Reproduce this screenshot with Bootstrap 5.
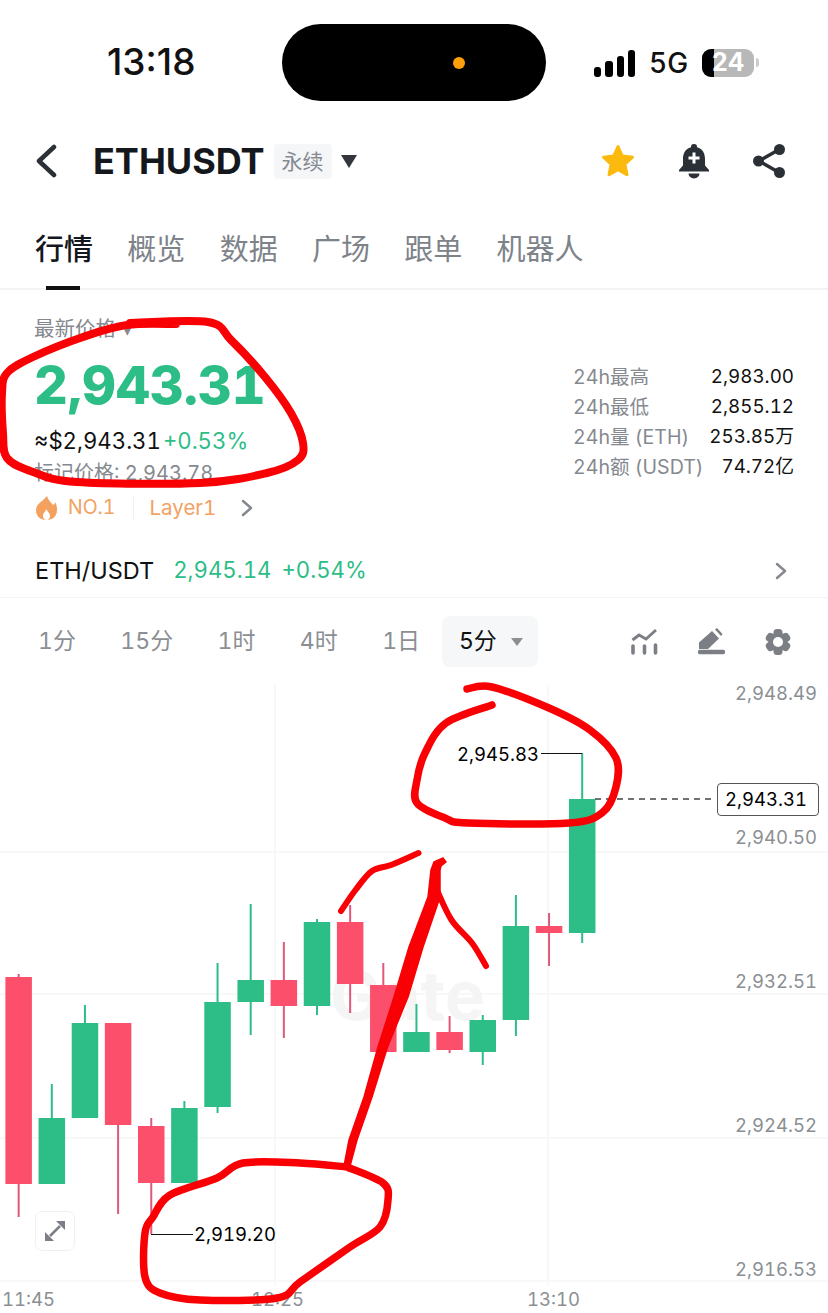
<!DOCTYPE html>
<html lang="zh-CN">
<head>
<meta charset="utf-8">
<title>ETHUSDT</title>
<link href="https://cdn.jsdelivr.net/npm/bootstrap@5.3.0/dist/css/bootstrap.min.css" rel="stylesheet">
<style>
html,body{margin:0;background:#fff}
body{width:828px;height:1313px;overflow:hidden;position:relative;font-family:Inter,"Noto Sans CJK SC",sans-serif;color:#111;font-variant-numeric:tabular-nums}
.status-row{height:77px;margin-top:24px;margin-bottom:24px;padding-left:107px}
.clock{width:175px;font-size:37px;font-weight:500;line-height:1;margin-top:-3px;font-variant-numeric:normal}
.island{width:264px;height:77px;border-radius:38.5px;background:#000;padding-left:171px}
.island-dot{width:12px;height:12px;border-radius:50%;background:#ff9f0a}
.signal{width:41px;height:28px;margin-left:48px;gap:4px}
.signal i{display:block;width:7.5px;border-radius:3px;background:#000}
.net{font-size:28px;font-weight:500;margin-left:14px;line-height:1;width:53px}
.battery{width:52px;height:28px;border-radius:9px;background:#b8b8b8;overflow:hidden;color:#fff;font-size:25px;font-weight:700;line-height:1}
.battery-fill{position:absolute;left:0;top:0;bottom:0;width:12px;background:#000}
.battery-nub{width:3px;height:9px;background:#ccc;border-radius:0 3px 3px 0;margin-left:2px}
.top-bar{height:72px;padding:0 42px 0 34px}
.pair-name{font-size:36px;font-weight:700;line-height:1;margin-left:36px;color:#14171c}
.perp{width:58px;height:35px;margin-left:9px;background:#f5f6f8;border-radius:4px;color:#858a92;font-size:21px;line-height:1}
.caret-down{width:0;height:0;border-left:8.5px solid transparent;border-right:8.5px solid transparent;border-top:13px solid #33373d;margin-left:9px}
.tabs-row{height:93px;border-bottom:2px solid #f3f3f3;padding-left:35px;gap:34.3px}
.tabs-row .nav-link{padding:0;margin-top:35px;height:58px;position:relative;font-size:29px;line-height:36px;color:#7e838a}
.tabs-row .nav-link.active{color:#14171c;font-weight:500}
.tabs-row .nav-link.active::after{content:"";position:absolute;left:11px;width:34px;height:4px;bottom:0;background:#111}
.quote{height:233px;padding:0 34px 0 34px}
.q-label{font-size:20.5px;line-height:30px;padding-top:24px;height:54px;color:#85898f}
.q-price{font-size:52.5px;font-weight:800;line-height:70px;margin-top:6px;color:#2dbd87}
.q-sub{font-size:22.2px;line-height:30px;margin-top:6px;color:#111}
.q-up{color:#2dbd87;margin-left:2px}
.q-mark{font-size:20px;line-height:30px;margin-top:2px;color:#85898f}
.q-tags{height:30px;margin-top:5px;font-size:20.5px;color:#f2a263;padding-left:2px}
.tag-no{font-size:19.5px;margin-left:11px}
.tag-split{width:1px;height:22px;background:#f0f0f0;margin:0 15px 0 18px}
.stats{width:221px;padding-top:72px}
.stat-row{height:30px;font-size:18.8px;line-height:30px;color:#111}
.stat-row span:first-child{color:#85898f;font-size:19.6px}
.spot-row{height:54px;margin-top:21px;padding:0 40px 0 35px;border-bottom:1px solid #f3f3f3;font-size:23.5px}
.spot-name{color:#111;margin-right:19px;line-height:1}
.spot-val{color:#2dbd87;line-height:1;margin-right:10px;font-size:22.2px}
.tf-row{height:80px;padding:18px 37px 11px 38px;align-items:flex-start}
.tf-row .nav-link{padding:0;font-size:23px;line-height:51px;color:#8b8f94;margin-right:44.4px}
.tf-row .nav-link.tf-on{width:96px;height:51px;margin-left:-22.6px;margin-right:0;background:#f5f7f8;border-radius:8px;color:#111;padding-left:17px}
.tf-caret{display:inline-block;width:0;height:0;border-left:6.5px solid transparent;border-right:6.5px solid transparent;border-top:8px solid #8b8f94;margin-left:14px;vertical-align:3px}
.tf-tools{height:51px;gap:40px}
.chart-box{height:635px}
.chart-svg{display:block}
.axis{font-size:18.5px;fill:#8b8f94}
.callout{font-size:18.5px;fill:#000}
.mark-ink{position:absolute;left:0;top:0;pointer-events:none}
.expand-btn{position:absolute;left:35px;top:533px;width:40px;height:40px;padding:0;background:#fff;border:1px solid #f0f0f0;border-radius:7px}
</style>
</head>
<body>

<div class="status-row d-flex align-items-center">
  <div class="clock">13:18</div>
  <div class="island d-flex align-items-center"><span class="island-dot"></span></div>
  <div class="signal d-flex align-items-end">
    <i style="height:10px"></i><i style="height:16px"></i><i style="height:21px"></i><i style="height:27px"></i>
  </div>
  <div class="net">5G</div>
  <div class="battery position-relative d-flex align-items-center justify-content-center"><span class="battery-fill"></span><span class="position-relative">24</span></div>
  <span class="battery-nub"></span>
</div>

<div class="top-bar d-flex align-items-center">
  <svg width="23" height="34" viewBox="0 0 23 34"><path d="M20 3 5 17l15 14" fill="none" stroke="#2b2f36" stroke-width="4.5" stroke-linecap="round" stroke-linejoin="round"/></svg>
  <div class="pair-name">ETHUSDT</div>
  <div class="perp d-flex align-items-center justify-content-center">永续</div>
  <span class="caret-down"></span>
  <div class="ms-auto d-flex align-items-center">
    <svg width="36" height="36" viewBox="0 0 36 36"><path d="M18 3.5l4.3 9.6 10.2 1.1-7.6 7 2.1 10.6L18 26.6l-9 5.2 2.1-10.6-7.6-7 10.2-1.1z" fill="#fcb90e" stroke="#fcb90e" stroke-width="3" stroke-linejoin="round"/></svg>
    <svg style="margin-left:42px" width="32" height="36" viewBox="0 0 32 36"><path d="M16 1a3 3 0 0 1 3 3.2c6 1.6 8 6.600 8 11.800v6.500l4 4.500v1.500H1V27l4-4.500V16C5 10.800 7 5.800 13 4.200A3 3 0 0 1 16 1z" fill="#2b2f36"/><path d="M10.500 30.500a5.500 5 0 0 0 11 0z" fill="#2b2f36"/><path d="M14.500 9.500h3v4h4v3h-4v4h-3v-4h-4v-3h4z" fill="#fff"/></svg>
    <svg style="margin-left:42px" width="34" height="36" viewBox="0 0 34 36"><path d="M28 6 7 18l21 12" fill="none" stroke="#2b2f36" stroke-width="3.500"/><circle cx="27.500" cy="6.500" r="5.500" fill="#2b2f36"/><circle cx="6.500" cy="18" r="5.500" fill="#2b2f36"/><circle cx="27.500" cy="29.500" r="5.500" fill="#2b2f36"/></svg>
  </div>
</div>

<nav class="nav tabs-row">
  <a class="nav-link active" href="#">行情</a>
  <a class="nav-link" href="#">概览</a>
  <a class="nav-link" href="#">数据</a>
  <a class="nav-link" href="#">广场</a>
  <a class="nav-link" href="#">跟单</a>
  <a class="nav-link" href="#">机器人</a>
</nav>

<div class="quote d-flex justify-content-between">
  <div>
    <div class="q-label">最新价格 ▾</div>
    <div class="q-price">2,943.31</div>
    <div class="q-sub">≈$2,943.31<span class="q-up">+0.53%</span></div>
    <div class="q-mark">标记价格: 2,943.78</div>
    <div class="q-tags d-flex align-items-center">
      <svg width="21" height="24" viewBox="0 0 21 24"><path d="M11 0c1 4 4 6 6 9 1.500-.5 2-2 2-3 2 3 2 6 2 8 0 6-4 10-10.500 10S0 20 0 14C0 8 6 6 11 0z" fill="#f4a15f"/><path d="M10.500 13c-1 2.500-3.500 3.500-3.500 7 0 2 1.500 4 3.500 4s3.500-2 3.500-4c0-3.500-3-4.500-3.500-7z" fill="#fff"/></svg>
      <span class="tag-no">NO.1</span>
      <span class="tag-split"></span>
      <span>Layer1</span>
      <svg style="margin-left:25px" width="13" height="18" viewBox="0 0 13 18"><path d="M2 2l8 7-8 7" fill="none" stroke="#85898f" stroke-width="2.500" stroke-linecap="round" stroke-linejoin="round"/></svg>
    </div>
  </div>
  <div class="stats">
    <div class="stat-row d-flex justify-content-between"><span>24h最高</span><span>2,983.00</span></div>
    <div class="stat-row d-flex justify-content-between"><span>24h最低</span><span>2,855.12</span></div>
    <div class="stat-row d-flex justify-content-between"><span>24h量 (ETH)</span><span>253.85万</span></div>
    <div class="stat-row d-flex justify-content-between"><span>24h额 (USDT)</span><span>74.72亿</span></div>
  </div>
</div>

<div class="spot-row d-flex align-items-center">
  <span class="spot-name">ETH/USDT</span>
  <span class="spot-val">2,945.14</span>
  <span class="spot-val">+0.54%</span>
  <svg class="ms-auto" width="13" height="18" viewBox="0 0 13 18"><path d="M2 2l8 7-8 7" fill="none" stroke="#85898f" stroke-width="2.500" stroke-linecap="round" stroke-linejoin="round"/></svg>
</div>

<div class="nav tf-row d-flex">
  <a class="nav-link" href="#">1分</a>
  <a class="nav-link" href="#">15分</a>
  <a class="nav-link" href="#">1时</a>
  <a class="nav-link" href="#">4时</a>
  <a class="nav-link" href="#">1日</a>
  <a class="nav-link tf-on" href="#">5分<span class="tf-caret"></span></a>
  <div class="ms-auto d-flex align-items-center tf-tools">
    <svg width="27" height="27" viewBox="0 0 27 27"><path d="M1.500 12 8 7l7 4 10-9" fill="none" stroke="#7b7f85" stroke-width="3"/><path d="M2 18v7M13.500 18v7M24.500 17v8" stroke="#7b7f85" stroke-width="3.600" stroke-linecap="round"/></svg>
    <svg width="27" height="27" viewBox="0 0 27 27"><path d="M1 21v-6.500L14 3l7 7.500L10 21z" fill="#7b7f85"/><path d="M17 1.500l2-1.500 5.500 6-1.500 2z" fill="#7b7f85"/><path d="M2 24h23" stroke="#7b7f85" stroke-width="4.500" stroke-linecap="round"/></svg>
    <svg width="26" height="26" viewBox="0 0 26 26"><g fill="#7b7f85"><circle cx="13" cy="13" r="9.500"/><rect x="8.500" y="0" width="9" height="26" rx="3.500"/><rect x="8.500" y="0" width="9" height="26" rx="3.500" transform="rotate(60 13 13)"/><rect x="8.500" y="0" width="9" height="26" rx="3.500" transform="rotate(120 13 13)"/></g><circle cx="13" cy="13" r="5" fill="#fff"/></svg>
  </div>
</div>

<div class="chart-box position-relative">
  <svg class="chart-svg" width="828" height="635" viewBox="0 678 828 635">
    <g stroke="#f6f6f6" stroke-width="1.500">
      <path d="M0 852H828M0 994H828M0 1138H828M0 1281H828"/>
      <path d="M275 685V1285M548 685V1285"/>
    </g>
    <text x="330" y="1020" font-size="68" font-weight="700" fill="#f5f5f5">Gate</text>
    <g id="candles"></g>
    <path d="M595 799H715" stroke="#444" stroke-width="1.500" stroke-dasharray="6 5"/>
    <path d="M541 753.500H582" stroke="#111" stroke-width="1.200"/>
    <path d="M151 1234.500H193" stroke="#111" stroke-width="1.200"/>
    <text class="callout" x="457" y="761">2,945.83</text>
    <text class="callout" x="194" y="1241">2,919.20</text>
    <g class="axis" text-anchor="end">
      <text x="817" y="700">2,948.49</text>
      <text x="817" y="844">2,940.50</text>
      <text x="817" y="988">2,932.51</text>
      <text x="817" y="1132">2,924.52</text>
      <text x="817" y="1276">2,916.53</text>
    </g>
    <rect x="717.500" y="783.500" width="101" height="32" rx="3.500" fill="#fff" stroke="#555"/>
    <text class="callout" x="725" y="806">2,943.31</text>
    <g class="axis">
      <text x="2" y="1306">11:45</text>
      <text x="251" y="1306">12:25</text>
      <text x="527" y="1306">13:10</text>
    </g>
  </svg>
  <button class="expand-btn d-flex align-items-center justify-content-center" type="button" aria-label="全屏">
    <svg width="22" height="22" viewBox="0 0 22 22"><g fill="#7b7f85"><path d="M1 21V12l9 9z"/><path d="M21 1v9l-9-9z"/></g><path d="M6 16 16 6" stroke="#7b7f85" stroke-width="2.500"/></svg>
  </button>
</div>

<svg class="mark-ink" width="828" height="1313" viewBox="0 0 828 1313" fill="none" stroke="#f80004" stroke-linecap="round" stroke-linejoin="round">
  <path id="ink1" stroke-width="8"/>
  <path id="ink2" stroke-width="7.500"/>
  <path id="ink3" stroke-width="7.500"/>
  <path id="ink4" stroke-width="6"/>
  <path id="ink5" stroke-width="6"/>
  <path fill="#f80004" stroke-width="1.500" d="M344 1166 349 1140 364 1097 378 1047 394 997 409 947 428 897 431 870 434 862 443 858 446 862 441 866 440 870 440 897 423 947 408 997 387.500 1047 372 1097 357 1140 350 1166Z"/>
</svg>

<script src="https://cdn.jsdelivr.net/npm/bootstrap@5.3.0/dist/js/bootstrap.bundle.min.js"></script>
<script>
var G='#2dbd87',R='#fb4f6c',RW='#e0587a';
var data=[
[R,974,1217,977,1184],[G,1084,1184,1118,1184],[G,1005,1118,1023,1118],[R,1023,1214,1023,1125],
[R,1118,1234,1126,1183],[G,1101,1183,1108,1183],[G,963,1113,1002,1107],[G,904,1035,980,1002],
[R,942,1038,980,1006],[G,919,1015,922,1006],[R,905,1013,922,984],[R,963,1052,985,1052],
[G,1004,1052,1032,1052],[R,1016,1053,1032,1050],[G,1015,1065,1020,1052],[G,895,1036,926,1020],
[R,913,966,926,933],[G,753,943,799,933]];
var h='',w=26.5;
data.forEach(function(d,i){
  var x=5.4+33.15*i,c=x+w/2;
  h+='<rect x="'+(c-1)+'" y="'+d[1]+'" width="2" height="'+(d[2]-d[1])+'" fill="'+(d[0]===R?RW:G)+'"/>';
  h+='<rect x="'+x+'" y="'+d[3]+'" width="'+w+'" height="'+(d[4]-d[3])+'" fill="'+d[0]+'"/>';
});
document.getElementById('candles').innerHTML=h;
function smooth(p){
  var d='M'+p[0][0]+' '+p[0][1];
  for(var i=0;i<p.length-1;i++){
    var a=p[i-1]||p[i],b=p[i],c=p[i+1],e=p[i+2]||c;
    d+='C'+(b[0]+(c[0]-a[0])/6)+' '+(b[1]+(c[1]-a[1])/6)+' '+(c[0]-(e[0]-b[0])/6)+' '+(c[1]-(e[1]-b[1])/6)+' '+c[0]+' '+c[1];
  }
  return d;
}
var ink={
ink1:[[176,324],[127,325],[83,337],[33,357],[7,373],[2,393],[3,433],[7,458],[33,472],[77,482],[200,483],[267,473],[298,460],[303,443],[291,413],[265,377],[231,340],[208,322],[130,323]],
ink2:[[467,689],[492,687],[549,708],[590,730],[616,758],[616,787],[603,812],[569,823],[468,823],[445,818],[417,803],[417,780],[425,753],[446,723],[492,705]],
ink3:[[347,1167],[300,1163],[243,1163],[217,1178],[170,1195],[153,1217],[145,1233],[145,1277],[160,1293],[200,1300],[277,1298],[300,1282],[350,1247],[380,1227],[388,1200],[383,1183],[347,1167]],
ink4:[[341,911],[355.5,890],[372,871],[391,865],[418.5,853]],
ink5:[[436,888],[451.5,920],[472,943],[486,966]]
};
for(var k in ink){document.getElementById(k).setAttribute('d',smooth(ink[k]));}
</script>
</body>
</html>
